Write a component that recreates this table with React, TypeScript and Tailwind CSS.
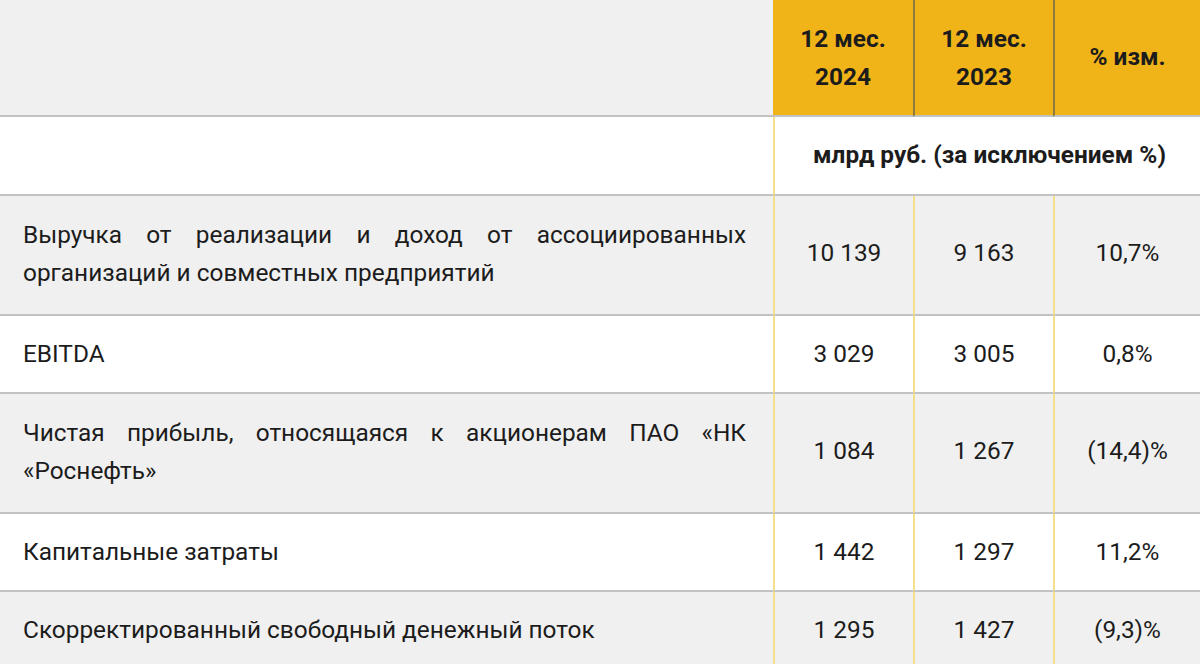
const ROWS = [
  { label: 'Выручка от реализации и доход от ассоциированных организаций и совместных предприятий', a: '10 139', b: '9 163', c: '10,7%', tall: true },
  { label: 'EBITDA', a: '3 029', b: '3 005', c: '0,8%', tall: false },
  { label: 'Чистая прибыль, относящаяся к акционерам ПАО «НК «Роснефть»', a: '1 084', b: '1 267', c: '(14,4)%', tall: true },
  { label: 'Капитальные затраты', a: '1 442', b: '1 297', c: '11,2%', tall: false },
  { label: 'Скорректированный свободный денежный поток', a: '1 295', b: '1 427', c: '(9,3)%', tall: false },
]

export default function App() {
  return (
    <div
      className="w-[1200px] h-[664px] overflow-hidden bg-white text-[#1c1c1c]"
      style={{ fontFamily: 'Roboto, "Liberation Sans", sans-serif' }}
    >
      <div className="grid grid-cols-[773px_140px_140px_147px]">
        {/* Header */}
        <div className="h-[117px] bg-[#f0f0f0] border-b-2 border-[#c2c2c2]" />
        <div className="h-[117px] bg-[#f0b419] border-b-2 border-b-[#c2c2c2] flex flex-col items-center justify-center text-[24.4px] font-bold leading-[38px] pt-[1px]">
          <span>12 мес.</span>
          <span>2024</span>
        </div>
        <div className="h-[117px] bg-[#f0b419] border-b-2 border-b-[#c2c2c2] border-l-2 border-l-[#8e7a3e] flex flex-col items-center justify-center text-[24.4px] font-bold leading-[38px] pt-[1px]">
          <span>12 мес.</span>
          <span>2023</span>
        </div>
        <div className="h-[117px] bg-[#f0b419] border-b-2 border-b-[#c2c2c2] border-l-2 border-l-[#8e7a3e] flex items-center justify-center text-[24.4px] font-bold leading-[38px] pb-[2px]">
          % изм.
        </div>

        {/* Units */}
        <div className="h-[79px] bg-white border-b-2 border-[#c2c2c2]" />
        <div className="col-span-3 h-[79px] bg-white border-b-2 border-b-[#c2c2c2] border-l-2 border-l-[#f2e08c] flex items-center justify-center text-[24.4px] font-bold pl-[4px]">
          млрд руб. (за исключением %)
        </div>

        {/* Body */}
        {ROWS.map((r, i) => {
          const bg = i % 2 === 0 ? 'bg-[#f0f0f0]' : 'bg-white'
          const h = r.tall ? 'h-[120px] pb-[3px]' : 'h-[78px]'
          const cell = `${h} ${bg} border-b-2 border-b-[#c2c2c2] border-l-2 border-l-[#f2e08c] flex items-center justify-center text-[24.4px]`
          return (
            <div key={i} className="contents">
              <div className={`${h} ${bg} border-b-2 border-[#c2c2c2] flex items-center pl-[23px] pr-[27px]`}>
                <p className="text-[24.4px] leading-[38px] text-justify w-full">{r.label}</p>
              </div>
              <div className={cell}>{r.a}</div>
              <div className={cell}>{r.b}</div>
              <div className={cell}>{r.c}</div>
            </div>
          )
        })}
      </div>
    </div>
  )
}
